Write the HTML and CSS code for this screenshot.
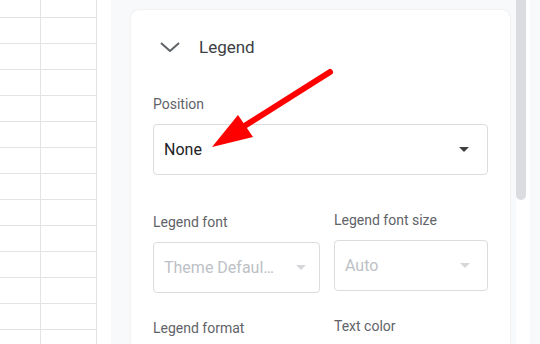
FILE: index.html
```html
<!DOCTYPE html>
<html lang="en">
<head>
    <meta charset="UTF-8">
    <meta name="viewport" content="width=device-width, initial-scale=1.0">
    <title>Legend</title>
    <link rel="stylesheet" href="styles.css">
</head>
<body>
    <div class="page">
        <div class="sheet">
            <div class="cell"></div><div class="cell"></div>
            <div class="cell"></div><div class="cell"></div>
            <div class="cell"></div><div class="cell"></div>
            <div class="cell"></div><div class="cell"></div>
            <div class="cell"></div><div class="cell"></div>
            <div class="cell"></div><div class="cell"></div>
            <div class="cell"></div><div class="cell"></div>
            <div class="cell"></div><div class="cell"></div>
            <div class="cell"></div><div class="cell"></div>
            <div class="cell"></div><div class="cell"></div>
            <div class="cell"></div><div class="cell"></div>
            <div class="cell"></div><div class="cell"></div>
            <div class="cell"></div><div class="cell"></div>
            <div class="cell"></div><div class="cell"></div>
        </div>
        <div class="divider"></div>
        <div class="panel">
            <div class="card">
                <div class="card-head">
                    <svg class="chevron" width="20" height="10" viewBox="0 0 20 10">
                        <polyline points="1,1 10,9 19,1" fill="none" stroke="#5f6368" stroke-width="2"/>
                    </svg>
                    <span class="card-title">Legend</span>
                </div>

                <div class="field-label">Position</div>
                <div class="select">
                    <span class="select-value">None</span>
                    <span class="caret"></span>
                </div>

                <div class="row">
                    <div>
                        <div class="field-label">Legend font</div>
                        <div class="select small disabled">
                            <span class="select-value">Theme Defaul…</span>
                            <span class="caret"></span>
                        </div>
                    </div>
                    <div>
                        <div class="field-label up">Legend font size</div>
                        <div class="select small disabled right">
                            <span class="select-value">Auto</span>
                            <span class="caret"></span>
                        </div>
                    </div>
                </div>

                <div class="row last">
                    <div class="field-label">Legend format</div>
                    <div class="field-label up">Text color</div>
                </div>
            </div>
        </div>
        <div class="scroll">
            <div class="thumb"></div>
        </div>
        <div class="edge"></div>
    </div>

    <!-- annotation arrow drawn over the panel -->
    <svg class="arrow" width="540" height="344" viewBox="0 0 540 344">
        <line x1="330" y1="72" x2="246" y2="125" stroke="#ff0000" stroke-width="6" stroke-linecap="round"/>
        <polygon points="212,147 238,115 253,137" fill="#ff0000"/>
    </svg>
</body>
</html>
```

FILE: styles.css
```css
*{
    margin: 0;
    padding: 0;
    box-sizing: border-box;
}
body{
    width: 540px;
    height: 344px;
    overflow: hidden;
    font-family: Roboto, "Liberation Sans", sans-serif;
    background: #fff;
    position: relative;
}
.page{
    display: flex;
    height: 344px;
    overflow: hidden;
}
.sheet{
    width: 97px;
    flex-shrink: 0;
    display: grid;
    grid-template-columns: 41px 56px;
    grid-template-rows: 18px repeat(13, 26px);
}
.cell{
    border-right: 1px solid #e2e3e3;
    border-bottom: 1px solid #e2e3e3;
}
.divider{
    width: 14px;
}
.panel{
    width: 405px;
    background: #f8f9fa;
    padding: 10px 6px 0 20px;
    overflow: hidden;
}
.card{
    background: #fff;
    height: 340px;
    border-radius: 8px 8px 0 0;
    box-shadow: 0 0 2px rgba(60, 64, 67, .12);
    padding: 0 22px;
}
.card-head{
    height: 74px;
    display: flex;
    align-items: center;
    padding-left: 7px;
}
.chevron{
    display: block;
}
.card-title{
    margin-left: 19px;
    font-size: 17px;
    color: #3c4043;
}
.field-label{
    margin-top: 10px;
    line-height: 20px;
    font-size: 14px;
    color: #5f6368;
}
.field-label.up{
    margin-top: 8px;
}
.select{
    margin-top: 10px;
    height: 51px;
    border: 1px solid #dadce0;
    border-radius: 4px;
    display: flex;
    align-items: center;
    justify-content: space-between;
    padding: 0 18px 0 10px;
}
.select-value{
    font-size: 16px;
    color: #202124;
    white-space: nowrap;
}
.caret{
    width: 0;
    height: 0;
    border-left: 5px solid transparent;
    border-right: 5px solid transparent;
    border-top: 5px solid #3c4043;
}
.select.small{
    padding-right: 13px;
}
.select.small.right{
    padding-right: 17px;
}
.disabled .select-value{
    color: #bdc1c6;
}
.disabled .caret{
    border-top-color: #d5d7da;
}
.row{
    display: grid;
    grid-template-columns: 167px 154px;
    column-gap: 14px;
    margin-top: 27px;
}
.row.last{
    margin-top: 15px;
}
.scroll{
    width: 14px;
    padding-right: 4px;
}
.thumb{
    width: 10px;
    height: 200px;
    background: #dadce0;
    border-radius: 0 0 5px 5px;
}
.edge{
    flex: 1;
    background: #f8f9fb;
}
.arrow{
    position: absolute;
    left: 0;
    top: 0;
}
```
